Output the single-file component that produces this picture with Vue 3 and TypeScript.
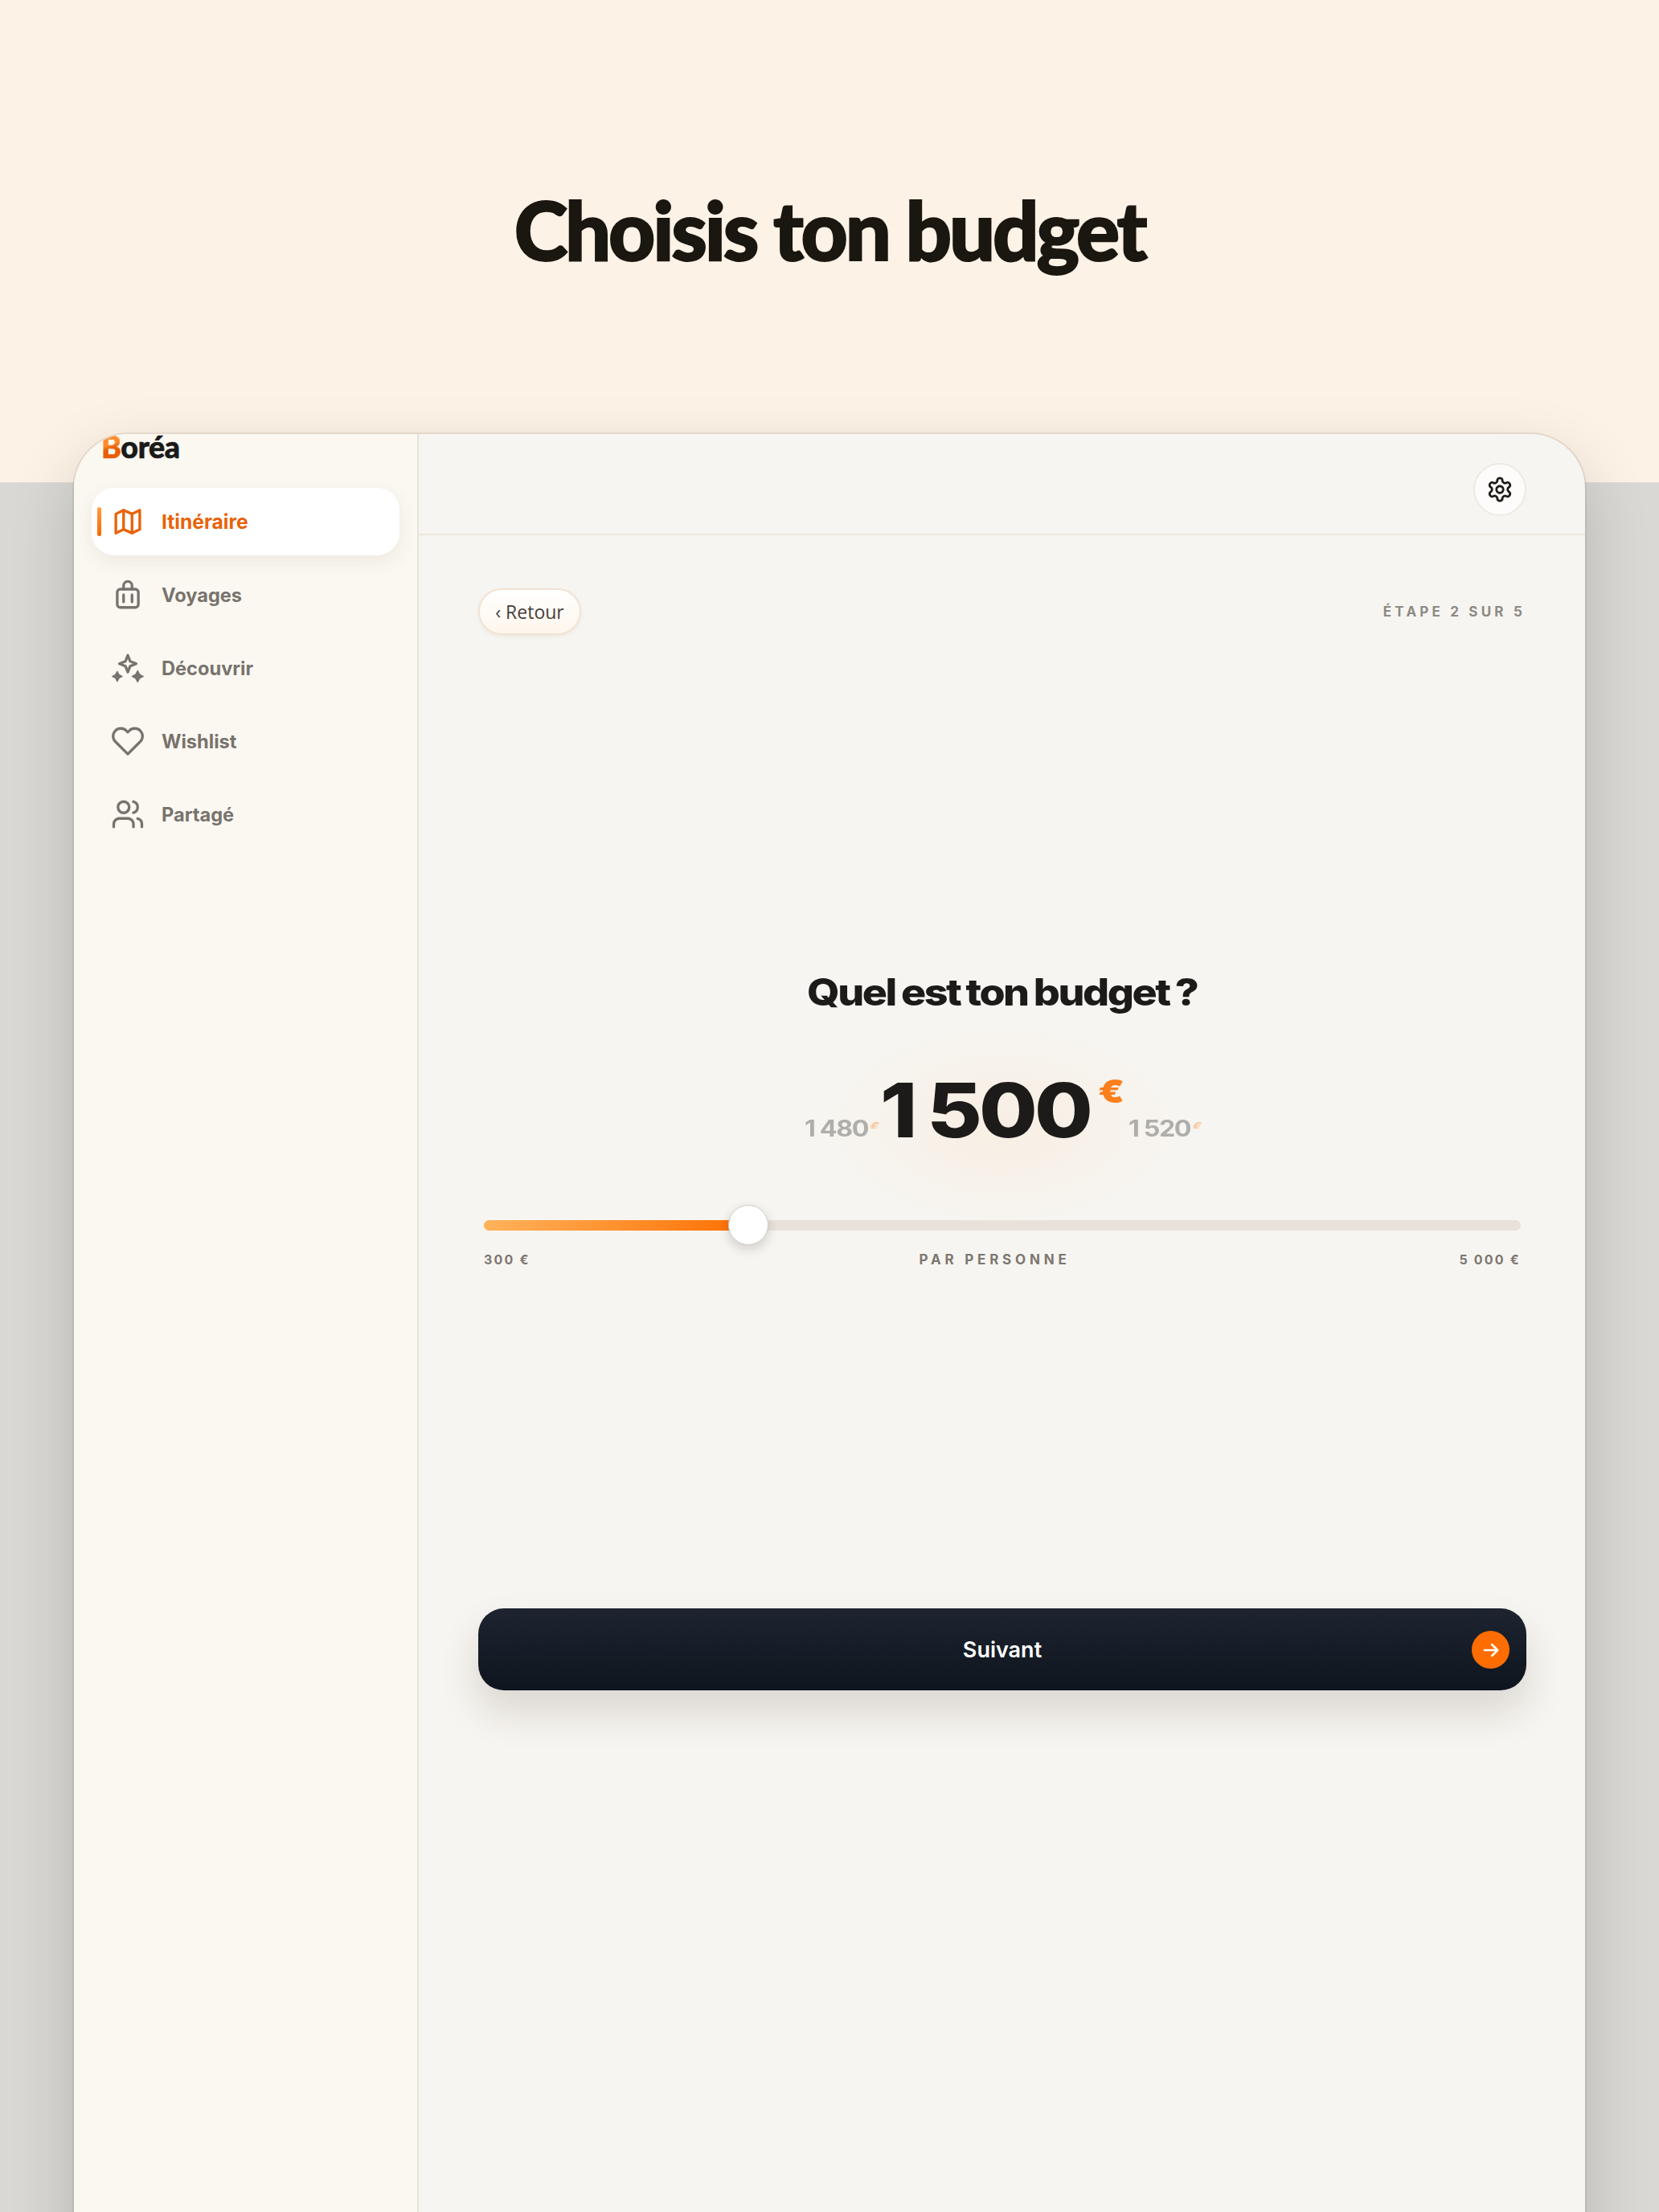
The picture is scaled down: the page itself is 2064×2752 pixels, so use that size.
<script setup lang="ts">
import { computed } from 'vue'

interface NavItem {
  label: string
  icon: string
  active?: boolean
}

const navItems: NavItem[] = [
  { label: 'Itinéraire', icon: 'map', active: true },
  { label: 'Voyages', icon: 'bag' },
  { label: 'Découvrir', icon: 'spark' },
  { label: 'Wishlist', icon: 'heart' },
  { label: 'Partagé', icon: 'users' }
]

const budget = 1500
const minBudget = 300
const maxBudget = 5000

const fillWidth = computed(() => `${((budget - minBudget) / (maxBudget - minBudget)) * 100}%`)
</script>

<template>
  <div class="page">
    <header class="hero">
      <h1>Choisis ton budget</h1>
    </header>

    <div class="device">
      <aside class="sidebar">
        <div class="logo"><span class="logo-b">B</span>oréa</div>
        <nav class="nav">
          <a v-for="item in navItems" :key="item.label" class="nav-item" :class="{ active: item.active }">
            <span v-if="item.active" class="nav-mark"></span>
            <svg class="nav-icon" viewBox="0 0 24 24" fill="none" stroke="currentColor" stroke-width="1.900" stroke-linecap="round" stroke-linejoin="round">
              <template v-if="item.icon === 'map'">
                <path d="M3.500 6.500 9 3.800l6 2.700 5.500-2.700v13.700L15 20.200l-6-2.700-5.500 2.700z" />
                <path d="M9 3.800v13.700M15 6.500v13.700" />
              </template>
              <template v-else-if="item.icon === 'bag'">
                <rect x="4.500" y="8" width="15" height="13" rx="2.200" />
                <path d="M9 8V5.500a3 3 0 0 1 6 0V8M9 12v5M15 12v5" />
              </template>
              <template v-else-if="item.icon === 'spark'">
                <path d="M12 3l1.700 4.300 4.300 1.700-4.300 1.700-1.700 4.300-1.700-4.300-4.300-1.700 4.300-1.700z" />
                <path d="M4.500 14.500l1.200 2.300 2.300 1.200-2.300 1.200-1.200 2.300-1.200-2.300-2.300-1.200 2.300-1.200z" fill="currentColor" stroke-width="0.800" />
                <path d="M19 14l1.400 2.600 2.600 1.400-2.600 1.400-1.400 2.600-1.400-2.600-2.600-1.400 2.600-1.400z" fill="currentColor" stroke-width="0.800" />
              </template>
              <template v-else-if="item.icon === 'heart'">
                <path d="M20.840 4.610a5.500 5.500 0 0 0-7.780 0L12 5.670l-1.060-1.060a5.500 5.500 0 0 0-7.780 7.780l1.060 1.060L12 21.230l7.780-7.780 1.060-1.060a5.500 5.500 0 0 0 0-7.780z" />
              </template>
              <template v-else>
                <path d="M16 21v-2a4 4 0 0 0-4-4H6a4 4 0 0 0-4 4v2" />
                <circle cx="9" cy="7" r="4" />
                <path d="M22 21v-2a4 4 0 0 0-3-3.870M16 3.130a4 4 0 0 1 0 7.750" />
              </template>
            </svg>
            <span>{{ item.label }}</span>
          </a>
        </nav>
      </aside>

      <main class="main">
        <div class="topbar">
          <button class="settings" type="button" aria-label="Réglages">
            <svg viewBox="0 0 24 24" fill="none" stroke="currentColor" stroke-width="2" stroke-linecap="round" stroke-linejoin="round">
              <path d="M12.220 2h-.44a2 2 0 0 0-2 2v.18a2 2 0 0 1-1 1.730l-.43.25a2 2 0 0 1-2 0l-.15-.08a2 2 0 0 0-2.730.73l-.22.38a2 2 0 0 0 .73 2.730l.15.1a2 2 0 0 1 1 1.720v.51a2 2 0 0 1-1 1.740l-.15.09a2 2 0 0 0-.73 2.730l.22.38a2 2 0 0 0 2.730.73l.15-.08a2 2 0 0 1 2 0l.43.25a2 2 0 0 1 1 1.730V20a2 2 0 0 0 2 2h.44a2 2 0 0 0 2-2v-.18a2 2 0 0 1 1-1.730l.43-.25a2 2 0 0 1 2 0l.15.08a2 2 0 0 0 2.730-.73l.22-.39a2 2 0 0 0-.73-2.730l-.15-.08a2 2 0 0 1-1-1.740v-.5a2 2 0 0 1 1-1.740l.15-.09a2 2 0 0 0 .73-2.730l-.22-.38a2 2 0 0 0-2.730-.73l-.15.08a2 2 0 0 1-2 0l-.43-.25a2 2 0 0 1-1-1.730V4a2 2 0 0 0-2-2z" />
              <circle cx="12" cy="12" r="3" />
            </svg>
          </button>
        </div>

        <section class="step">
          <div class="step-head">
            <button class="back" type="button">‹ Retour</button>
            <span class="step-count">ÉTAPE 2 SUR 5</span>
          </div>

          <div class="budget">
            <h2 class="question"><span>Quel est ton budget ?</span></h2>

            <div class="amounts">
              <div class="glow"></div>
              <div class="side side-left"><span class="wide">1 480<i>€</i></span></div>
              <div class="current"><span class="wide">1 500</span><em>€</em></div>
              <div class="side side-right"><span class="wide">1 520<i>€</i></span></div>
            </div>

            <div class="slider">
              <div class="track">
                <div class="fill" :style="{ width: fillWidth }">
                  <span class="thumb"></span>
                </div>
              </div>
              <div class="scale">
                <span>300 €</span>
                <span class="scale-mid">PAR PERSONNE</span>
                <span>5 000 €</span>
              </div>
            </div>
          </div>

          <button class="next" type="button">
            <span>Suivant</span>
            <span class="next-arrow">
              <svg viewBox="0 0 24 24" fill="none" stroke="currentColor" stroke-width="2.200" stroke-linecap="round" stroke-linejoin="round">
                <path d="M5 12h14M13 6l6 6-6 6" />
              </svg>
            </span>
          </button>
        </section>
      </main>
    </div>
  </div>
</template>

<style scoped>
.page {
  width: 2064px;
  height: 2752px;
  overflow: hidden;
  background: #d9d8d4;
  font-family: Inter, 'Liberation Sans', sans-serif;
  color: #1c1b19;
}

.hero {
  height: 600px;
  background: #fdf2e6;
  display: flex;
  justify-content: center;
  padding-top: 228px;
  box-sizing: border-box;
}

.hero h1 {
  margin: 0;
  font-family: Lato, sans-serif;
  font-weight: 900;
  font-size: 101px;
  line-height: 114px;
  letter-spacing: -3.200px;
  color: #1a1610;
  -webkit-text-stroke: 2px #1a1610;
}

.device {
  width: 1880px;
  height: 2300px;
  margin: -60px 0 0 92px;
  display: flex;
  position: relative;
  overflow: hidden;
  border-radius: 68px 68px 0 0;
  box-shadow: 0 0 0 2px rgba(110, 90, 60, 0.12), 0 30px 80px rgba(0, 0, 0, 0.17);
  background: #f7f5f1;
}

.sidebar {
  width: 429px;
  flex-shrink: 0;
  box-sizing: border-box;
  background: #fbf8f2;
  border-right: 2px solid #e9e3da;
  padding: 0 22px;
}

.logo {
  height: 67px;
  padding-left: 12px;
  font-family: Lato, sans-serif;
  font-weight: 900;
  font-size: 37.500px;
  line-height: 32px;
  color: #1a1a18;
  letter-spacing: -0.300px;
  -webkit-text-stroke: 0.700px #1a1a18;
}

.logo-b {
  background: linear-gradient(160deg, #ff8a2a 45%, #e85d04 55%);
  -webkit-background-clip: text;
  background-clip: text;
  color: transparent;
  -webkit-text-stroke: 0.700px transparent;
}

.nav {
  display: flex;
  flex-direction: column;
  gap: 7px;
}

.nav-item {
  position: relative;
  height: 84px;
  display: flex;
  align-items: center;
  gap: 21px;
  padding-left: 24px;
  border-radius: 28px;
  font-weight: 700;
  font-size: 23.600px;
  color: #78736d;
}

.nav-item.active {
  background: #fff;
  color: #e8620a;
  font-size: 24.600px;
  box-shadow: 0 8px 24px rgba(90, 60, 30, 0.08);
}

.nav-mark {
  position: absolute;
  left: 7px;
  top: 24px;
  width: 5px;
  height: 36px;
  border-radius: 3px;
  background: linear-gradient(#ff9d45, #f56a00);
}

.nav-icon {
  width: 42px;
  height: 42px;
  flex-shrink: 0;
}

.main {
  flex: 1;
  display: flex;
  flex-direction: column;
}

.topbar {
  height: 126px;
  flex-shrink: 0;
  box-sizing: border-box;
  border-bottom: 2px solid #ece8e1;
  display: flex;
  align-items: flex-start;
  justify-content: flex-end;
  padding: 36px 73px 0 0;
}

.settings {
  width: 66px;
  height: 66px;
  padding: 0;
  display: grid;
  place-items: center;
  border-radius: 50%;
  border: 2px solid #eee9e1;
  background: #fdfcfa;
  color: #1c1b19;
}

.settings svg {
  width: 34px;
  height: 34px;
}

.step {
  padding: 66px 73px 0 74px;
  display: flex;
  flex-direction: column;
}

.step-head {
  display: flex;
  justify-content: space-between;
  align-items: center;
}

.back {
  height: 58px;
  width: 128px;
  padding: 0;
  border-radius: 29px;
  border: 2px solid #f1e3d3;
  background: linear-gradient(#fff, #fef6ec);
  box-shadow: 0 2px 5px rgba(120, 80, 40, 0.07);
  font-family: 'Open Sans', sans-serif;
  font-size: 23px;
  color: #45403a;
}

.step-count {
  font-size: 17px;
  font-weight: 700;
  letter-spacing: 4.200px;
  color: #8b8a85;
  padding-right: 1px;
}

.budget {
  margin-top: 414px;
  padding: 0 7px;
}

.question {
  margin: 0;
  height: 60px;
  display: flex;
  justify-content: center;
}

.question span,
.wide {
  display: inline-block;
  white-space: nowrap;
  font-weight: 800;
}

.question span {
  font-size: 46px;
  line-height: 60px;
  letter-spacing: -2.200px;
  word-spacing: -1.500px;
  color: #1c1b19;
  transform: scaleX(1.130);
}

.amounts {
  position: relative;
  margin-top: 57px;
  height: 120px;
  display: flex;
  justify-content: center;
  align-items: flex-end;
}

.glow {
  position: absolute;
  left: 50%;
  top: -46px;
  width: 440px;
  height: 250px;
  margin-left: -220px;
  background: radial-gradient(closest-side, rgba(255, 190, 130, 0.13), rgba(255, 190, 130, 0));
}

.side {
  position: relative;
  height: 34px;
  margin-bottom: 20px;
  color: #b0aeaa;
}

.side-left {
  width: 97px;
}

.side-right {
  width: 90px;
}

.side .wide {
  font-size: 28px;
  line-height: 34px;
  font-weight: 700;
  letter-spacing: -1.200px;
  transform: scaleX(1.150);
  transform-origin: left center;
}

.side i {
  display: inline-block;
  height: 10px;
  overflow: hidden;
  font-style: normal;
  font-size: 16px;
  line-height: 16px;
  vertical-align: 10px;
  margin-left: 2px;
  color: #f9c9a0;
}

.current {
  position: relative;
  width: 306px;
  height: 120px;
}

.current .wide {
  font-size: 94px;
  line-height: 120px;
  letter-spacing: -3.500px;
  word-spacing: -3px;
  color: #1c1b19;
  transform: scaleX(1.120);
  transform-origin: left center;
  margin-left: -3px;
}

.current em {
  position: absolute;
  left: 268px;
  top: 17px;
  font-style: normal;
  font-weight: 900;
  font-size: 40px;
  line-height: 40px;
  color: #fb7f1c;
  transform: scaleX(1.180);
  transform-origin: left center;
}

.slider {
  margin-top: 77px;
}

.track {
  position: relative;
  height: 13px;
  border-radius: 7px;
  background: #e9e2da;
}

.fill {
  position: relative;
  height: 100%;
  border-radius: 7px;
  background: linear-gradient(90deg, #ffb35c, #ff6f00);
}

.thumb {
  position: absolute;
  right: -25px;
  top: -19px;
  width: 50px;
  height: 50px;
  box-sizing: border-box;
  border-radius: 50%;
  background: #fff;
  border: 1px solid #cfcdca;
  box-shadow: 0 5px 14px rgba(40, 30, 20, 0.18);
}

.scale {
  margin-top: 26px;
  display: flex;
  justify-content: space-between;
  font-size: 16px;
  line-height: 20px;
  font-weight: 700;
  letter-spacing: 2.200px;
  color: #7c7770;
}

.scale-mid {
  font-size: 17px;
  letter-spacing: 4.800px;
}

.next {
  position: relative;
  margin-top: 424px;
  height: 102px;
  width: 100%;
  padding: 0;
  border: none;
  border-radius: 32px;
  background: linear-gradient(#1d2430, #0f151e);
  box-shadow: 0 26px 50px rgba(40, 30, 20, 0.14);
  color: #fff;
  font-family: Inter, sans-serif;
  font-size: 27px;
  font-weight: 600;
}

.next-arrow {
  position: absolute;
  right: 21px;
  top: 28px;
  width: 47px;
  height: 47px;
  display: grid;
  place-items: center;
  border-radius: 50%;
  background: #ff6d00;
}

.next-arrow svg {
  width: 28px;
  height: 28px;
}
</style>
